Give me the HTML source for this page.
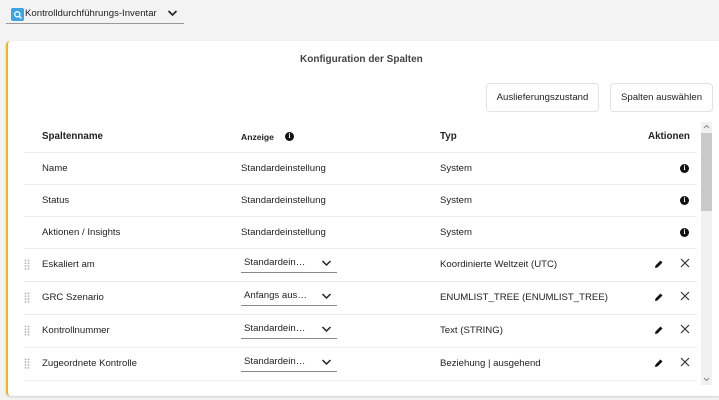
<!DOCTYPE html>
<html><head><meta charset="utf-8"><style>
*{margin:0;padding:0;box-sizing:border-box}
body{width:719px;height:400px;background:#f3f3f3;font-family:"Liberation Sans",sans-serif;font-size:9.6px;color:#222;position:relative;overflow:hidden}
.a{position:absolute;white-space:nowrap}
.card{position:absolute;left:6px;top:41px;width:713px;height:355px;background:#fff;border-left:2px solid #f5b120;border-radius:4px 0 0 4px;box-shadow:0 1px 2px rgba(0,0,0,.15)}
.btn{position:absolute;top:83px;height:29px;border:1px solid #e2e2e2;border-radius:4px;background:#fff;font-size:9.6px;line-height:27px;text-align:center;color:#222}
.line{position:absolute;left:24px;width:673px;height:1px;background:#ececec}
.b{font-weight:bold}
.sel{position:absolute;left:241px;width:96px;height:22px;border-bottom:1px solid #888;font-size:9.6px;line-height:24px;padding-left:3px}
.sel svg{position:absolute;right:5px;top:8px}
.drag{position:absolute;left:24px;width:6px;height:11px;background-image:radial-gradient(circle,#bbb 0.8px,transparent 0.9px);background-size:3px 2.8px}
.info{position:absolute;width:9px;height:9px;border-radius:50%;background:#111;color:#fff;font:bold 7px "Liberation Serif",serif;text-align:center;line-height:9px}
</style></head><body>
<div class="a" style="left:11px;top:8px;width:13px;height:13px;background:#3ba4e4;border-radius:2px"></div>
<svg class="a" style="left:13px;top:10px" width="10" height="10" viewBox="0 0 10 10"><circle cx="4.3" cy="4.3" r="2.6" fill="none" stroke="#fff" stroke-width="1.3"/><path d="M6.2 6.2L8.5 8.5" stroke="#fff" stroke-width="1.4"/></svg>
<div class="a" style="left:25px;top:8px;font-size:9.6px">Kontrolldurchführungs-Inventar</div>
<svg class="a" style="left:167px;top:9px" width="11" height="8" viewBox="0 0 11 8"><path d="M1.5 2L5.5 6L9.5 2" fill="none" stroke="#222" stroke-width="1.6"/></svg>
<div class="a" style="left:6px;top:23px;width:178px;height:1px;background:#999"></div>
<div class="card"></div>
<div class="a b" style="left:300px;top:54px;font-size:10px;color:#444">Konfiguration der Spalten</div>
<div class="btn" style="left:486px;width:113px">Auslieferungszustand</div>
<div class="btn" style="left:610px;width:103px">Spalten auswählen</div>
<div class="a b" style="left:42px;top:131px;font-size:9.8px">Spaltenname</div>
<div class="a b" style="left:241px;top:132px;font-size:8.6px">Anzeige</div>
<div class="info" style="left:285px;top:132px">i</div>
<div class="a b" style="left:440px;top:131px;font-size:9.8px">Typ</div>
<div class="a b" style="left:648px;top:131px;font-size:9.8px">Aktionen</div>
<div class="line" style="top:152px"></div>
<div class="line" style="top:184px"></div>
<div class="line" style="top:216px"></div>
<div class="line" style="top:248px"></div>
<div class="line" style="top:281px"></div>
<div class="line" style="top:314px"></div>
<div class="line" style="top:347px"></div>
<div class="line" style="top:380px"></div>
<div class="a" style="left:42px;top:163px">Name</div><div class="a" style="left:241px;top:163px">Standardeinstellung</div><div class="a" style="left:440px;top:163px">System</div><div class="info" style="left:680px;top:164px">i</div>
<div class="a" style="left:42px;top:195px">Status</div><div class="a" style="left:241px;top:195px">Standardeinstellung</div><div class="a" style="left:440px;top:195px">System</div><div class="info" style="left:680px;top:196px">i</div>
<div class="a" style="left:42px;top:227px">Aktionen / Insights</div><div class="a" style="left:241px;top:227px">Standardeinstellung</div><div class="a" style="left:440px;top:227px">System</div><div class="info" style="left:680px;top:228px">i</div>

<div class="drag" style="top:259px"></div><div class="a" style="left:42px;top:259px">Eskaliert am</div>
<div class="sel" style="top:251px">Standardein…<svg width="11" height="8" viewBox="0 0 11 8"><path d="M1.5 2L5.5 6L9.5 2" fill="none" stroke="#222" stroke-width="1.5"/></svg></div>
<div class="a" style="left:440px;top:259px">Koordinierte Weltzeit (UTC)</div>

<div class="drag" style="top:292px"></div><div class="a" style="left:42px;top:292px">GRC Szenario</div>
<div class="sel" style="top:284px">Anfangs aus…<svg width="11" height="8" viewBox="0 0 11 8"><path d="M1.5 2L5.5 6L9.5 2" fill="none" stroke="#222" stroke-width="1.5"/></svg></div>
<div class="a" style="left:440px;top:292px">ENUMLIST_TREE (ENUMLIST_TREE)</div>

<div class="drag" style="top:325px"></div><div class="a" style="left:42px;top:325px">Kontrollnummer</div>
<div class="sel" style="top:317px">Standardein…<svg width="11" height="8" viewBox="0 0 11 8"><path d="M1.5 2L5.5 6L9.5 2" fill="none" stroke="#222" stroke-width="1.5"/></svg></div>
<div class="a" style="left:440px;top:325px">Text (STRING)</div>

<div class="drag" style="top:358px"></div><div class="a" style="left:42px;top:358px">Zugeordnete Kontrolle</div>
<div class="sel" style="top:350px">Standardein…<svg width="11" height="8" viewBox="0 0 11 8"><path d="M1.5 2L5.5 6L9.5 2" fill="none" stroke="#222" stroke-width="1.5"/></svg></div>
<div class="a" style="left:440px;top:358px">Beziehung | ausgehend</div>

<svg class="a" style="left:654px;top:259px" width="10" height="10" viewBox="0 0 10 10"><path d="M1 9L1.5 6.5L6.5 1.5L8.5 3.5L3.5 8.5Z" fill="#111"/></svg>
<svg class="a" style="left:680px;top:258px" width="10" height="10" viewBox="0 0 10 10"><path d="M1 1L9 9M9 1L1 9" stroke="#333" stroke-width="1.2"/></svg>
<svg class="a" style="left:654px;top:292px" width="10" height="10" viewBox="0 0 10 10"><path d="M1 9L1.5 6.5L6.5 1.5L8.5 3.5L3.5 8.5Z" fill="#111"/></svg>
<svg class="a" style="left:680px;top:291px" width="10" height="10" viewBox="0 0 10 10"><path d="M1 1L9 9M9 1L1 9" stroke="#333" stroke-width="1.2"/></svg>
<svg class="a" style="left:654px;top:325px" width="10" height="10" viewBox="0 0 10 10"><path d="M1 9L1.5 6.5L6.5 1.5L8.5 3.5L3.5 8.5Z" fill="#111"/></svg>
<svg class="a" style="left:680px;top:324px" width="10" height="10" viewBox="0 0 10 10"><path d="M1 1L9 9M9 1L1 9" stroke="#333" stroke-width="1.2"/></svg>
<svg class="a" style="left:654px;top:358px" width="10" height="10" viewBox="0 0 10 10"><path d="M1 9L1.5 6.5L6.5 1.5L8.5 3.5L3.5 8.5Z" fill="#111"/></svg>
<svg class="a" style="left:680px;top:357px" width="10" height="10" viewBox="0 0 10 10"><path d="M1 1L9 9M9 1L1 9" stroke="#333" stroke-width="1.2"/></svg>

<div class="a" style="left:701px;top:122px;width:11px;height:263px;background:#f1f1f1"></div>
<div class="a" style="left:701px;top:133px;width:11px;height:78px;background:#c9c9c9"></div>
<svg class="a" style="left:703px;top:124px" width="7" height="5" viewBox="0 0 7 5"><path d="M1 4L3.5 1.5L6 4" fill="none" stroke="#888" stroke-width="1"/></svg>
<svg class="a" style="left:703px;top:377px" width="7" height="5" viewBox="0 0 7 5"><path d="M1 1L3.5 3.5L6 1" fill="none" stroke="#888" stroke-width="1"/></svg>
</body></html>
